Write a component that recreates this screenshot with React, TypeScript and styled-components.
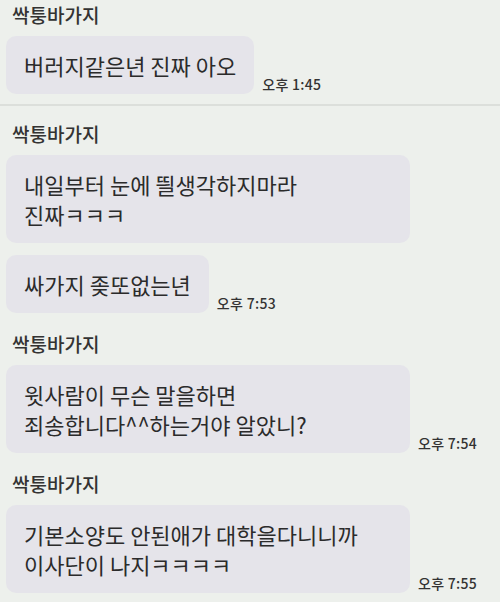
import styled, { createGlobalStyle } from 'styled-components'

const GlobalStyle = createGlobalStyle`
  * { box-sizing: border-box; }
  html, body {
    margin: 0;
    padding: 0;
    background: #edf0ec;
  }
  body {
    font-family: 'Noto Sans CJK KR', 'Noto Sans', sans-serif;
    color: #2b2b2b;
  }
`

interface IMessage {
  text: string
  time?: string
  full?: boolean
}

interface IGroup {
  sender: string
  messages: IMessage[]
  divider?: boolean
}

const groups: IGroup[] = [
  {
    sender: '싹퉁바가지',
    divider: true,
    messages: [{ text: '버러지같은년 진짜 아오', time: '오후 1:45' }],
  },
  {
    sender: '싹퉁바가지',
    messages: [
      { text: '내일부터 눈에 띌생각하지마라\n진짜ㅋㅋㅋ', full: true },
      { text: '싸가지 좆또없는년', time: '오후 7:53' },
    ],
  },
  {
    sender: '싹퉁바가지',
    messages: [
      { text: '윗사람이 무슨 말을하면\n죄송합니다^^하는거야 알았니?', time: '오후 7:54', full: true },
    ],
  },
  {
    sender: '싹퉁바가지',
    messages: [
      { text: '기본소양도 안된애가 대학을다니니까\n이사단이 나지ㅋㅋㅋㅋ', time: '오후 7:55', full: true },
    ],
  },
]

const App = () => {
  return (
    <Styled.Wrap>
      <GlobalStyle />
      {groups.map((group, i) => (
        <Styled.Group key={i} $divider={group.divider}>
          <Styled.Name>{group.sender}</Styled.Name>
          <Styled.Messages>
            {group.messages.map((msg, j) => (
              <Styled.Row key={j}>
                <Styled.Bubble $full={msg.full}>{msg.text}</Styled.Bubble>
                {msg.time && <Styled.Time>{msg.time}</Styled.Time>}
              </Styled.Row>
            ))}
          </Styled.Messages>
        </Styled.Group>
      ))}
    </Styled.Wrap>
  )
}

export default App

const Styled = {
  Wrap: styled.div`
    width: 500px;
    height: 602px;
    overflow: hidden;
    padding-top: 3px;
    background: #edf0ec;
  `,
  Group: styled.div<{ $divider?: boolean }>`
    padding-bottom: ${(p) => (p.$divider ? '10px' : '19px')};
    margin-bottom: ${(p) => (p.$divider ? '16px' : '0')};
    border-bottom: ${(p) => (p.$divider ? '2px solid #dcdfdb' : 'none')};
  `,
  Name: styled.div`
    padding-left: 12px;
    font-size: 19px;
    line-height: 24px;
    font-weight: 500;
    color: #333;
    margin-bottom: 9px;
  `,
  Messages: styled.div`
    display: flex;
    flex-direction: column;
    gap: 12px;
  `,
  Row: styled.div`
    display: flex;
    align-items: flex-end;
    gap: 8px;
    padding-left: 6px;
  `,
  Bubble: styled.div<{ $full?: boolean }>`
    width: ${(p) => (p.$full ? '404px' : 'auto')};
    padding: 14px 18px;
    background: #e5e4ea;
    border-radius: 10px;
    font-size: 22px;
    line-height: 30px;
    color: #2b2b2b;
    white-space: pre-line;
  `,
  Time: styled.div`
    font-size: 14px;
    line-height: 16px;
    font-weight: 500;
    color: #333;
    margin-bottom: 2px;
    letter-spacing: 0.3px;
    white-space: nowrap;
  `,
}
